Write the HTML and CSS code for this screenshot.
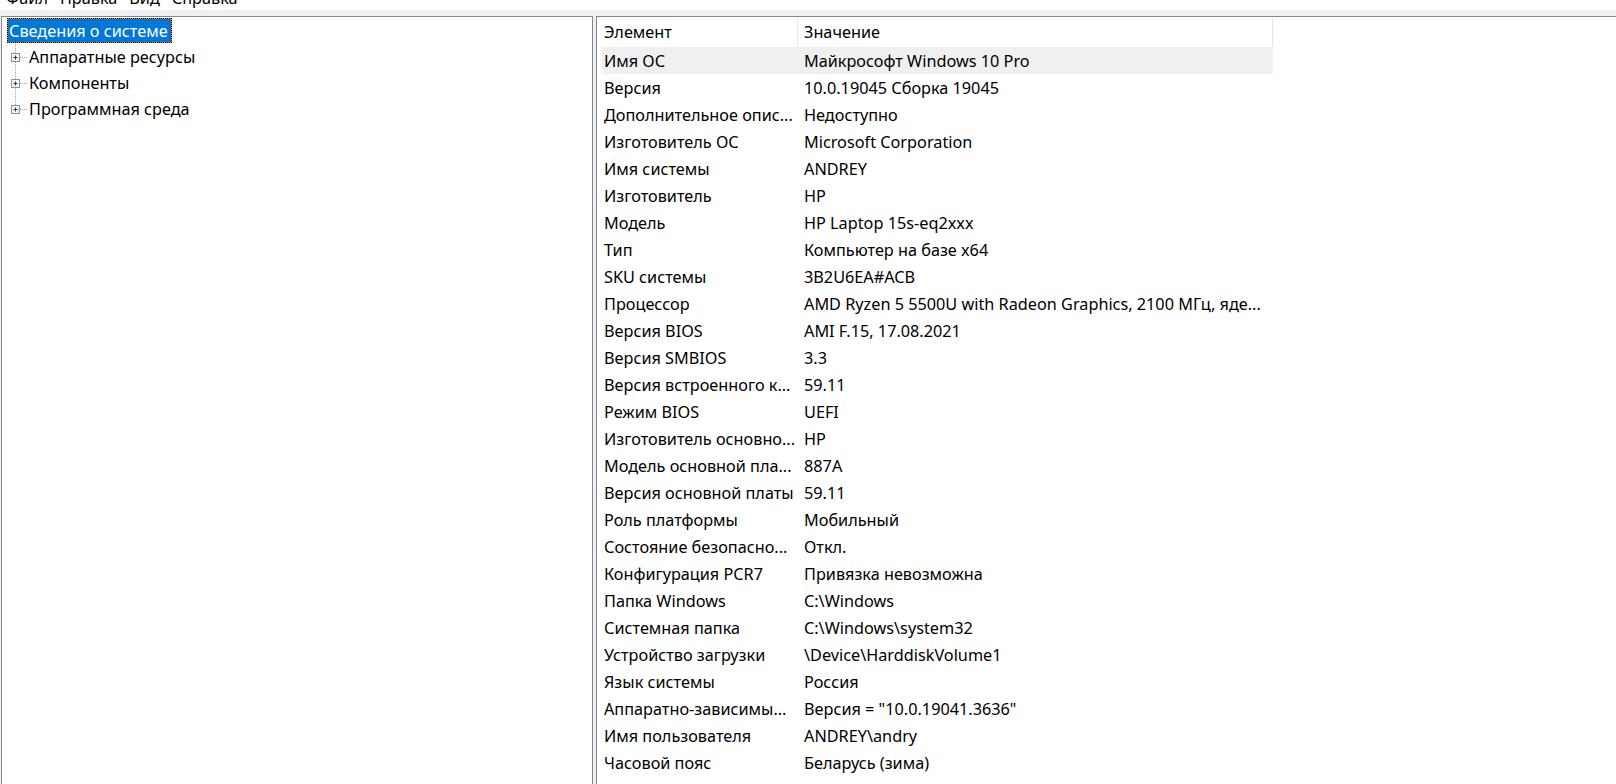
FILE: index.html
```html
<!DOCTYPE html>
<html lang="ru">
<head>
<meta charset="utf-8">
<title>Сведения о системе</title>
<link rel="stylesheet" href="styles.css">
</head>
<body>
<div class="menubar">
  <div class="menu-row">
    <span class="menu-item">Файл</span>
    <span class="menu-item">Правка</span>
    <span class="menu-item">Вид</span>
    <span class="menu-item">Справка</span>
  </div>
</div>
<div class="band"></div>
<div class="main">
  <div class="tree-pane">
    <div class="tree">
      <div class="tree-row root"><span class="label selected">Сведения о системе</span></div>
      <div class="tree-row child">
        <svg class="twisty" width="21" height="26" viewBox="0 0 21 26"><line class="dots" x1="8.5" y1="0" x2="8.5" y2="26"/><line class="dots" x1="13" y1="13.5" x2="21" y2="13.5"/><rect class="box" x="4.5" y="9.5" width="8" height="8"/><path class="plus" d="M6.5 13.5h4M8.5 11.5v4"/></svg>
        <span class="label">Аппаратные ресурсы</span>
      </div>
      <div class="tree-row child">
        <svg class="twisty" width="21" height="26" viewBox="0 0 21 26"><line class="dots" x1="8.5" y1="0" x2="8.5" y2="26"/><line class="dots" x1="13" y1="13.5" x2="21" y2="13.5"/><rect class="box" x="4.5" y="9.5" width="8" height="8"/><path class="plus" d="M6.5 13.5h4M8.5 11.5v4"/></svg>
        <span class="label">Компоненты</span>
      </div>
      <div class="tree-row child">
        <svg class="twisty" width="21" height="26" viewBox="0 0 21 26"><line class="dots" x1="8.5" y1="0" x2="8.5" y2="10"/><line class="dots" x1="13" y1="13.5" x2="21" y2="13.5"/><rect class="box" x="4.5" y="9.5" width="8" height="8"/><path class="plus" d="M6.5 13.5h4M8.5 11.5v4"/></svg>
        <span class="label">Программная среда</span>
      </div>
    </div>
  </div>
  <div class="list-pane">
    <div class="list">
      <div class="list-head">
        <div class="hcell c1">Элемент</div>
        <div class="hcell c2">Значение</div>
      </div>
      <div class="row hot"><div class="cell c1">Имя ОС</div><div class="cell c2">Майкрософт Windows 10 Pro</div></div>
      <div class="row"><div class="cell c1">Версия</div><div class="cell c2">10.0.19045 Сборка 19045</div></div>
      <div class="row"><div class="cell c1">Дополнительное опис...</div><div class="cell c2">Недоступно</div></div>
      <div class="row"><div class="cell c1">Изготовитель ОС</div><div class="cell c2">Microsoft Corporation</div></div>
      <div class="row"><div class="cell c1">Имя системы</div><div class="cell c2">ANDREY</div></div>
      <div class="row"><div class="cell c1">Изготовитель</div><div class="cell c2">HP</div></div>
      <div class="row"><div class="cell c1">Модель</div><div class="cell c2">HP Laptop 15s-eq2xxx</div></div>
      <div class="row"><div class="cell c1">Тип</div><div class="cell c2">Компьютер на базе x64</div></div>
      <div class="row"><div class="cell c1">SKU системы</div><div class="cell c2">3B2U6EA#ACB</div></div>
      <div class="row"><div class="cell c1">Процессор</div><div class="cell c2">AMD Ryzen 5 5500U with Radeon Graphics, 2100 МГц, яде...</div></div>
      <div class="row"><div class="cell c1">Версия BIOS</div><div class="cell c2">AMI F.15, 17.08.2021</div></div>
      <div class="row"><div class="cell c1">Версия SMBIOS</div><div class="cell c2">3.3</div></div>
      <div class="row"><div class="cell c1">Версия встроенного к...</div><div class="cell c2">59.11</div></div>
      <div class="row"><div class="cell c1">Режим BIOS</div><div class="cell c2">UEFI</div></div>
      <div class="row"><div class="cell c1">Изготовитель основно...</div><div class="cell c2">HP</div></div>
      <div class="row"><div class="cell c1">Модель основной пла...</div><div class="cell c2">887A</div></div>
      <div class="row"><div class="cell c1">Версия основной платы</div><div class="cell c2">59.11</div></div>
      <div class="row"><div class="cell c1">Роль платформы</div><div class="cell c2">Мобильный</div></div>
      <div class="row"><div class="cell c1">Состояние безопасно...</div><div class="cell c2">Откл.</div></div>
      <div class="row"><div class="cell c1">Конфигурация PCR7</div><div class="cell c2">Привязка невозможна</div></div>
      <div class="row"><div class="cell c1">Папка Windows</div><div class="cell c2">C:\Windows</div></div>
      <div class="row"><div class="cell c1">Системная папка</div><div class="cell c2">C:\Windows\system32</div></div>
      <div class="row"><div class="cell c1">Устройство загрузки</div><div class="cell c2">\Device\HarddiskVolume1</div></div>
      <div class="row"><div class="cell c1">Язык системы</div><div class="cell c2">Россия</div></div>
      <div class="row"><div class="cell c1">Аппаратно-зависимы...</div><div class="cell c2">Версия = "10.0.19041.3636"</div></div>
      <div class="row"><div class="cell c1">Имя пользователя</div><div class="cell c2">ANDREY\andry</div></div>
      <div class="row"><div class="cell c1">Часовой пояс</div><div class="cell c2">Беларусь (зима)</div></div>
    </div>
  </div>
</div>
</body>
</html>
```

FILE: styles.css
```css
html, body {
  margin: 0;
  height: 784px;
  overflow: hidden;
}
body {
  font-family: "Noto Sans", "Open Sans", sans-serif;
  font-size: 16.25px;
  color: #000;
  background: #fff;
}
.menubar {
  height: 10px;
  overflow: hidden;
  background: #fff;
}
.menu-row {
  display: flex;
  gap: 12px;
  padding-left: 6px;
  margin-top: -12px;
  line-height: 20px;
}
.band {
  height: 6px;
  background: #f0f0f0;
}
.main {
  display: flex;
  gap: 3px;
  padding-left: 1px;
  height: 768px;
  background: #f0f0f0;
}
.tree-pane {
  width: 590px;
  flex: none;
  border: 1px solid #828790;
  border-bottom: none;
  background: #fff;
}
.tree {
  padding: 1px 0 0 5px;
}
.tree-row {
  display: flex;
  align-items: center;
  height: 26px;
}
.root {
  align-items: flex-start;
}
.label {
  white-space: nowrap;
  padding-left: 1px;
}
.selected {
  display: flex;
  align-items: center;
  height: 23px;
  padding: 0 3px 0 1px;
  color: #fff;
  border: 1px dotted #000;
  background: linear-gradient(#0078d7, #0078d7) padding-box, #f7871f border-box;
}
.twisty {
  display: block;
  flex: none;
}
.dots {
  stroke: #a0a0a0;
  stroke-width: 1;
  stroke-dasharray: 1 1;
}
.box {
  fill: #f4f4f4;
  stroke: #919191;
  stroke-width: 1;
}
.plus {
  stroke: #1e395b;
  stroke-width: 1;
  fill: none;
}
.list-pane {
  flex: 1;
  border-left: 1px solid #828790;
  border-top: 1px solid #828790;
  background: #fff;
  padding-left: 5px;
}
.list {
  width: 671px;
}
.list-head {
  display: flex;
  height: 30px;
  align-items: center;
}
.hcell {
  height: 28px;
  display: flex;
  align-items: center;
  white-space: nowrap;
}
.hcell.c1 {
  width: 193px;
  padding-left: 2px;
  border-right: 1px solid #e5e5e5;
}
.hcell.c2 {
  width: 468px;
  padding-left: 6px;
  border-right: 1px solid #e5e5e5;
}
.row {
  display: flex;
  height: 27px;
  align-items: center;
}
.row.hot {
  background: #f0f0f0;
}
.cell {
  white-space: nowrap;
  overflow: hidden;
}
.cell.c1 {
  width: 194px;
  padding-left: 2px;
}
.cell.c2 {
  width: 469px;
  padding-left: 6px;
}
```
